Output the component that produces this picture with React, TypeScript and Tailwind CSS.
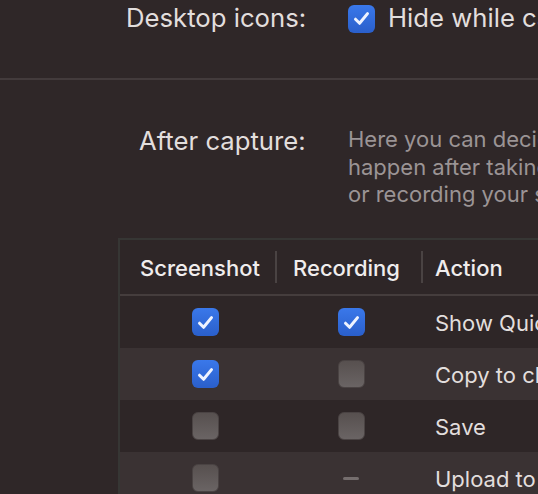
import React from "react";

const font = { fontFamily: "Inter, 'Noto Sans', sans-serif" };

function Check({ state }: { state: "on" | "off" | "dash" }) {
  if (state === "dash") {
    return (
      <div className="flex h-[28px] w-[27px] shrink-0 items-center justify-center">
        <div className="h-[3px] w-[16px] rounded-full bg-[#756e6e]" />
      </div>
    );
  }
  if (state === "off") {
    return (
      <div className="h-[28px] w-[27px] shrink-0 rounded-[6px] border border-[#4a4343] bg-gradient-to-b from-[#57504f] to-[#6a6464]" />
    );
  }
  return (
    <div className="flex h-[28px] w-[27px] shrink-0 items-center justify-center rounded-[6px] bg-gradient-to-b from-[#3a78ea] to-[#2a5fcb]">
      <svg width="17" height="15" viewBox="0 0 17 15" fill="none">
        <path
          d="M2.5 8.2 L6.6 12.3 L14.5 2.6"
          stroke="#eef3ff"
          strokeWidth="3"
          strokeLinecap="round"
          strokeLinejoin="round"
        />
      </svg>
    </div>
  );
}

const rows: { s: "on" | "off" | "dash"; r: "on" | "off" | "dash"; a: string }[] = [
  { s: "on", r: "on", a: "Show Quick Access Overlay" },
  { s: "on", r: "off", a: "Copy to clipboard" },
  { s: "off", r: "off", a: "Save" },
  { s: "off", r: "dash", a: "Upload to Cloud" },
];

export default function App() {
  return (
    <div
      className="relative h-[494px] w-[538px] overflow-hidden bg-[#2f2728] text-[#e2dedd]"
      style={font}
    >
      {/* Desktop icons row */}
      <div className="flex h-[37px] items-center whitespace-nowrap pl-[126px] text-[25.7px]">
        <div className="w-[222px] shrink-0">Desktop icons:</div>
        <Check state="on" />
        <div className="ml-[13px] shrink-0">Hide while capturing</div>
      </div>

      <div className="mt-[41px] h-[2px] bg-[#433b3c]" />

      {/* After capture */}
      <div className="flex items-start whitespace-nowrap pl-[139px] pt-[46px]">
        <div className="w-[209px] shrink-0 text-[25.7px] leading-[30px]">After capture:</div>
        <div className="shrink-0 text-[22px] leading-[27.5px] text-[#9b9495]">
          <div>Here you can decide what should</div>
          <div>happen after taking a screenshot</div>
          <div>or recording your screen.</div>
        </div>
      </div>

      {/* Table */}
      <div className="ml-[118px] mt-[29.5px] border-l-2 border-t-2 border-[#363634] bg-[#2e2627] text-[22px]">
        <div className="flex h-[56px] items-center whitespace-nowrap border-b-2 border-[#453d3d] font-medium text-[#f0eded]">
          <div className="w-[155px] shrink-0 pl-[20px] pt-[3px]">Screenshot</div>
          <div className="h-[32px] w-[2px] shrink-0 bg-[#4a4343]" />
          <div className="w-[144px] shrink-0 pl-[16px] pt-[3px]">Recording</div>
          <div className="h-[32px] w-[2px] shrink-0 bg-[#4a4343]" />
          <div className="shrink-0 pl-[12px] pt-[3px]">Action</div>
        </div>
        {rows.map((row, i) => (
          <div
            key={i}
            className={`flex h-[52px] items-center whitespace-nowrap ${
              i % 2 === 1 ? "bg-[#3a3233]" : "bg-[#2e2627]"
            }`}
          >
            <div className="flex w-[170px] shrink-0 justify-center">
              <Check state={row.s} />
            </div>
            <div className="flex w-[122px] shrink-0 justify-center">
              <Check state={row.r} />
            </div>
            <div className="shrink-0 pl-[23px] pt-[3px]">{row.a}</div>
          </div>
        ))}
      </div>
    </div>
  );
}
